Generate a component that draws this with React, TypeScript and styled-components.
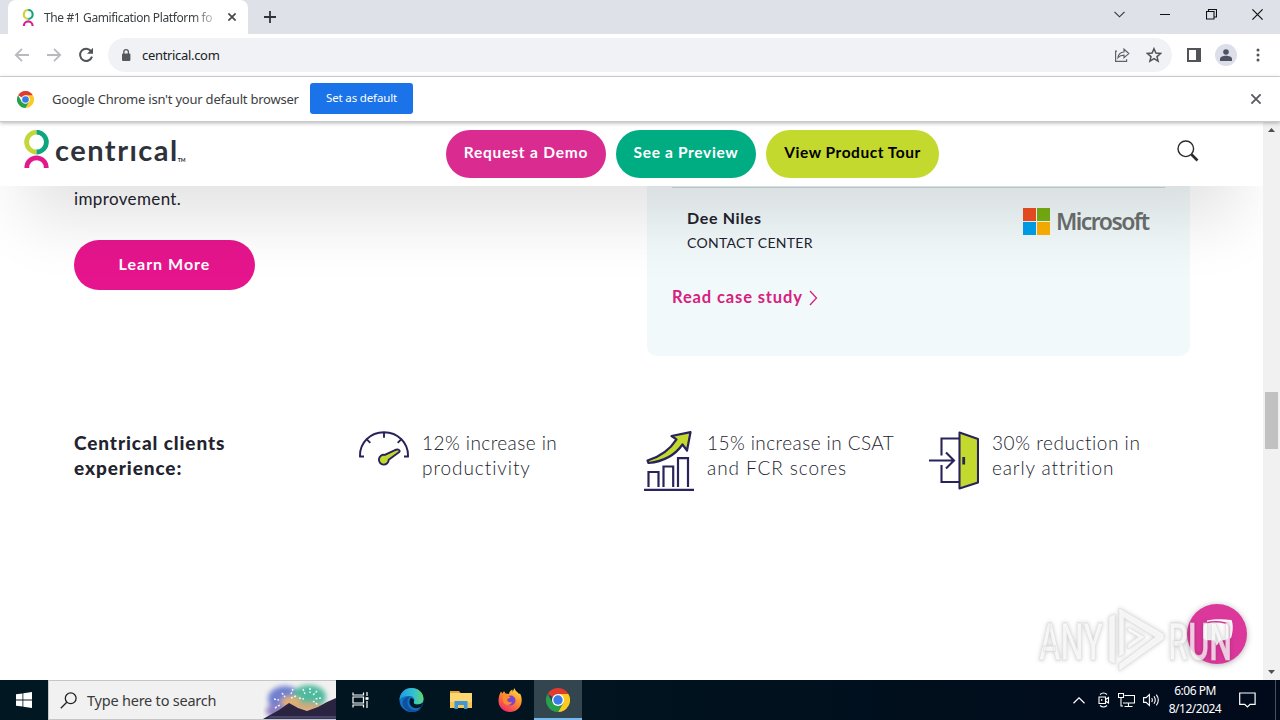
import type { ReactNode } from "react";
import styled, { createGlobalStyle } from "styled-components";

const ui = `"Noto Sans", "Open Sans", sans-serif`;
const brand = `"Lato", "Inter", sans-serif`;
const navy = "#29235c";
const lime = "#c4d92e";

type Stat = {
  icon: ReactNode;
  lines: { text: string; spacing: number }[];
};

const stats: Stat[] = [
  {
    icon: <GaugeIcon />,
    lines: [
      { text: "12% increase in", spacing: 0.43 },
      { text: "productivity", spacing: 0.93 },
    ],
  },
  {
    icon: <GrowthIcon />,
    lines: [
      { text: "15% increase in CSAT", spacing: 0.42 },
      { text: "and FCR scores", spacing: 0.93 },
    ],
  },
  {
    icon: <DoorIcon />,
    lines: [
      { text: "30% reduction in", spacing: 0.55 },
      { text: "early attrition", spacing: 0.88 },
    ],
  },
];

export default function App() {
  return (
    <Screen>
      <GlobalStyle />
      <TabStrip>
        <Tab>
          <CentricalMark width={12} height={17} />
          <TabTitle>The #1 Gamification Platform fo</TabTitle>
          <CrossIcon size={8} weight={1.7} color="#45494d" />
        </Tab>
        <NewTab>
          <svg width="12" height="12" viewBox="0 0 12 12" stroke="#303337" strokeWidth="1.8">
            <path d="M6 0v12M0 6h12" />
          </svg>
        </NewTab>
        <WindowControls>
          <svg width="11" height="7" viewBox="0 0 11 7" fill="none" stroke="#333" strokeWidth="1.1">
            <path d="M.5 .8l5 5 5-5" />
          </svg>
          <svg width="11" height="11" viewBox="0 0 11 11" stroke="#111">
            <path d="M0 5.500h10" />
          </svg>
          <svg width="11" height="11" viewBox="0 0 11 11" fill="none" stroke="#111" strokeWidth="1.1">
            <path d="M.5 2.500h7.500V10H.5zM2.500 2.500V.5h8v7.500H8" />
          </svg>
          <CrossIcon size={11} weight={1.2} color="#111" />
        </WindowControls>
      </TabStrip>

      <Toolbar>
        <NavIcons>
          <svg width="16" height="14" viewBox="0 0 16 14" fill="none" stroke="#b8babd" strokeWidth="1.8">
            <path d="M15 7H2M8 .8L1.8 7 8 13.2" />
          </svg>
          <svg width="16" height="14" viewBox="0 0 16 14" fill="none" stroke="#b8babd" strokeWidth="1.8">
            <path d="M1 7h13M8 .8L14.2 7 8 13.2" />
          </svg>
          <svg width="16" height="16" viewBox="0 0 16 16" fill="none" stroke="#505357" strokeWidth="2">
            <path d="M13.2 4.3A6.1 6.1 0 1 0 14 9.6" />
            <path d="M15 .8v6H9z" fill="#505357" stroke="none" />
          </svg>
        </NavIcons>
        <AddressBar>
          <svg width="10" height="12" viewBox="0 0 10 12" fill="#55585c">
            <rect x="1" y="4.5" width="8.4" height="7.5" rx="1" />
            <path d="M2.8 5V3a2.3 2.3 0 0 1 4.6 0v2" fill="none" stroke="#55585c" strokeWidth="1.3" />
          </svg>
          <Url>centrical.com</Url>
          <svg width="16" height="16" viewBox="0 0 16 16" fill="none" stroke="#5f6368" strokeWidth="1.2">
            <path d="M3 4.200H1.600v10.200h11v-2.200M4 10.600c.4-3.600 2.400-5.400 6-5.600V2.200l4.800 4.400L10 10.800V8.200C7.400 8.200 5.400 9 4 10.600z" />
          </svg>
          <svg width="16" height="16" viewBox="0 0 16 16" fill="none" stroke="#505357" strokeWidth="1.5">
            <path d="M8 1.700l1.900 4.400 4.700.4-3.600 3.100 1.100 4.600L8 11.700l-4.100 2.500L5 9.600 1.400 6.500l4.700-.4z" />
          </svg>
        </AddressBar>
        <svg width="14" height="14" viewBox="0 0 14 14">
          <path d="M0 0h14v14H0zM2 2v10h7V2z" fill="#505357" fillRule="evenodd" />
        </svg>
        <Avatar>
          <svg width="12" height="12" viewBox="0 0 12 12" fill="#4d5264">
            <circle cx="6" cy="3" r="2.8" />
            <path d="M0 12V10c0-2 3-3.200 6-3.200S12 8 12 10v2z" />
          </svg>
        </Avatar>
        <svg width="4" height="14" viewBox="0 0 4 14" fill="#505357">
          <circle cx="2" cy="2" r="1.500" />
          <circle cx="2" cy="7" r="1.500" />
          <circle cx="2" cy="12" r="1.500" />
        </svg>
      </Toolbar>

      <InfoBar>
        <ChromeIcon size={17} />
        <InfoText>Google Chrome isn't your default browser</InfoText>
        <DefaultButton>Set as default</DefaultButton>
        <CrossIcon size={10} weight={1.8} color="#55585c" />
      </InfoBar>

      <Viewport>
        <Page>
          <SiteHeader>
            <Logo>
              <CentricalMark width={26} height={38} />
              <LogoText>centrıcal</LogoText>
              <Trademark>TM</Trademark>
            </Logo>
            <Actions>
              <Pill $bg="#d92b90" $width={160} $spacing={0.8}>Request a Demo</Pill>
              <Pill $bg="#00ad83" $width={140} $spacing={0.66}>See a Preview</Pill>
              <Pill $bg={lime} $width={173} $spacing={0.52} $dark>View Product Tour</Pill>
            </Actions>
            <svg width="22" height="22" viewBox="0 0 22 22" fill="none" stroke="#2a2a2a">
              <circle cx="8.800" cy="8.800" r="7.800" strokeWidth="1.400" />
              <path d="M14.500 14.500l6 6" strokeWidth="2.600" />
            </svg>
          </SiteHeader>

          <Feature>
            <FeatureCopy>
              <Copy>improvement.</Copy>
              <LearnMore>Learn More</LearnMore>
            </FeatureCopy>
            <Quote>
              <Person>
                <div>
                  <PersonName>Dee Niles</PersonName>
                  <PersonRole>CONTACT CENTER</PersonRole>
                </div>
                <Microsoft>
                  <svg width="27" height="27" viewBox="0 0 27 27">
                    <path fill="#f04e23" d="M0 0h13v13H0z" />
                    <path fill="#78b013" d="M14 0h13v13H14z" />
                    <path fill="#00a1ee" d="M0 14h13v13H0z" />
                    <path fill="#fdb100" d="M14 14h13v13H14z" />
                  </svg>
                  <MicrosoftText>Microsoft</MicrosoftText>
                </Microsoft>
              </Person>
              <CaseLink>
                Read case study
                <svg width="9" height="16" viewBox="0 0 9 16" fill="none" stroke="#d6217f" strokeWidth="1.300">
                  <path d="M1 1l6.500 7L1 15" />
                </svg>
              </CaseLink>
            </Quote>
          </Feature>

          <Results>
            <ResultsTitle>
              Centrical clients
              <br />
              experience:
            </ResultsTitle>
            {stats.map((stat) => (
              <Result key={stat.lines[0].text}>
                {stat.icon}
                <div>
                  {stat.lines.map((line) => (
                    <ResultLine key={line.text} $spacing={line.spacing}>
                      {line.text}
                    </ResultLine>
                  ))}
                </div>
              </Result>
            ))}
          </Results>

          <ChatButton>
            <svg width="32" height="30" viewBox="0 0 32 30">
              <path d="M6 1.500c7-1.700 16-1.700 24.500-.5 2 5 1.500 12-.5 18l-6 3L6 8z" fill="#fff" />
              <path d="M4.500 4c6-1.500 14-1.500 20 0 2.500.5 3.500 1.800 3.500 4v9.500c0 2.500-1 3.800-3.500 4.200l-5 .6-4 6-2.500-6-8-.6c-2.500-.3-3.500-1.700-3.500-4.200V8c0-2.200.8-3.500 3-4z" fill="#fff" stroke="#dc379b" strokeWidth="1.500" />
            </svg>
          </ChatButton>
          <Watermark />
        </Page>
        <Scrollbar>
          <Arrow />
          <Thumb />
          <Arrow $down />
        </Scrollbar>
      </Viewport>

      <Taskbar>
        <Start>
          <svg width="16" height="16" viewBox="0 0 16 16" fill="#fff">
            <path d="M0 2.300l6.500-.9v6.200H0zM7.300 1.300L16 0v7.600H7.300zM0 8.400h6.500v6.200L0 13.700zM7.300 8.400H16V16l-8.700-1.300z" />
          </svg>
        </Start>
        <SearchBox>
          <svg width="17" height="17" viewBox="0 0 17 17" fill="none" stroke="#222" strokeWidth="1.300">
            <circle cx="10.700" cy="6.300" r="5.400" />
            <path d="M6.800 10.200L.8 16.200" />
          </svg>
          <SearchText>Type here to search</SearchText>
          <Fireworks />
        </SearchBox>
        <TaskView>
          <svg width="17" height="16" viewBox="0 0 17 16" fill="none" stroke="#fff" strokeWidth="1.200">
            <path d="M1 .5v2.500h10.500V.5M1 15.500V13h10.500v2.500M1 5h10.500v6H1zM15 0v4M15 9v7" />
            <path d="M13.500 5.200h3v2.600h-3z" fill="#fff" stroke="none" />
          </svg>
        </TaskView>
        <TaskButton>
          <EdgeIcon />
        </TaskButton>
        <TaskButton>
          <FolderIcon />
        </TaskButton>
        <TaskButton>
          <FirefoxIcon />
        </TaskButton>
        <TaskButton $active>
          <ChromeIcon size={24} />
        </TaskButton>
        <Tray>
          <svg width="12" height="7" viewBox="0 0 12 7" fill="none" stroke="#fff" strokeWidth="1.200">
            <path d="M.5 6.200L6 .8l5.500 5.400" />
          </svg>
          <svg width="12" height="16" viewBox="0 0 12 16" fill="none" stroke="#fff" strokeWidth="1.100">
            <path d="M2 2.500Q5.500-.5 9 2.500M2 13.500q3.500 3 7 0M1 5h6.500v6.500H1zM7.500 7.500l3-2v5.500l-3-2M3.700 7v2" />
          </svg>
          <svg width="17" height="14" viewBox="0 0 17 14" fill="none" stroke="#fff" strokeWidth="1.100">
            <path d="M6.500 2.500h10v7.500H5M10.500 10v3.500M6.500 13.500h8M.5.500h5v4H.5zM3 4.500v8.500h2" />
          </svg>
          <svg width="17" height="14" viewBox="0 0 17 14" fill="none" stroke="#fff" strokeWidth="1.100">
            <path d="M.6 4.600h2.500L6.400 1.500v11L3.100 9.400H.6zM8.700 5q1.300 2 0 4M11 3.300q2.500 3.700 0 7.400M13.300 1.600q4 5.400 0 10.800" />
          </svg>
        </Tray>
        <Clock>
          <span>6:06 PM</span>
          <span>8/12/2024</span>
        </Clock>
        <Notifications>
          <svg width="17" height="16" viewBox="0 0 17 16" fill="none" stroke="#fff" strokeWidth="1.200">
            <path d="M.7 1h15.400v11.300h-5L8.400 15l-2.700-2.700h-5z" />
          </svg>
        </Notifications>
      </Taskbar>
    </Screen>
  );
}

function CrossIcon({ size, weight, color }: { size: number; weight: number; color: string }) {
  return (
    <svg width={size} height={size} viewBox={`0 0 ${size} ${size}`} stroke={color} strokeWidth={weight}>
      <path d={`M.4 .4L${size - 0.4} ${size - 0.4}M${size - 0.4} .4L.4 ${size - 0.4}`} />
    </svg>
  );
}

function CentricalMark({ width, height }: { width: number; height: number }) {
  return (
    <svg width={width} height={height} viewBox="0 0 26 38" fill="none" strokeWidth="4.800">
      <path d="M13.500 22a9.900 9.900 0 0 1 0-19.800" stroke="#c4d63a" />
      <path d="M13.500 2.200a9.900 9.900 0 0 1 0 19.800" stroke="#0fa57f" />
      <path d="M3.800 38v-.5a9.700 9.700 0 0 1 19.400 0v.5" stroke="#e01a8c" />
    </svg>
  );
}

function ChromeIcon({ size }: { size: number }) {
  return (
    <svg width={size} height={size} viewBox="0 0 24 24">
      <path d="M12 12L1.600 6A12 12 0 0 1 22.400 6z" fill="#df3b2f" />
      <path d="M12 6h10.400A12 12 0 0 1 12 24l5.200-9z" fill="#fccb22" />
      <path d="M6.800 15L1.600 6A12 12 0 0 0 12 24l5.200-9z" fill="#27a04b" />
      <circle cx="12" cy="12" r="6" fill="#fff" />
      <circle cx="12" cy="12" r="4.700" fill="#3a7bea" />
    </svg>
  );
}

function GaugeIcon() {
  return (
    <svg width="50" height="60" viewBox="0 0 50 60" fill="none" stroke={navy} strokeWidth="1.900">
      <path d="M5 25.500H1C.5 12 11 1.200 25 1.200S49.500 12 49 25.500h-4M25 1.200v5.500M8.300 8.800l3 3M41.700 8.800l-3 3" />
      <path d="M39.800 18.800c1.600 1 .8 2-.2 2.700l-9.900 7.200a4.900 4.900 0 1 1-4-4.800l9.200-4.300c2-1 3.700-1.600 4.900-.8z" fill={lime} />
    </svg>
  );
}

function GrowthIcon() {
  return (
    <svg width="50" height="60" viewBox="0 0 50 60" fill="none" stroke={navy} strokeWidth="2.200">
      <path d="M0 58.800h50M4.500 56V41h10v15M19.500 56V35.500h9.700V56M34 56V27.200h10V56" />
      <path d="M46.500 1.200L27.500 5l5 3.300C25 20 15 26 3.500 29.500l1 2.500C19 30.500 30.500 25 38.500 13.500L43 19.500z" fill={lime} strokeLinejoin="round" />
    </svg>
  );
}

function DoorIcon() {
  return (
    <svg width="50" height="60" viewBox="0 0 50 60" fill="none" stroke={navy} strokeWidth="2.100">
      <path d="M30 7.500H12.500v17M12.500 34v17H30M0 29.500h25M17 21.500l8 8-8 8" />
      <path d="M30.500 1.500L49 8v43.500l-18.500 6z" fill={lime} strokeLinejoin="round" />
      <path d="M34.700 26v7.500" strokeWidth="2.800" />
    </svg>
  );
}

function EdgeIcon() {
  return (
    <svg width="25" height="24" viewBox="0 0 25 24">
      <defs>
        <linearGradient id="edgeTop" x1="0" x2="1">
          <stop offset="0" stopColor="#1b9de2" />
          <stop offset=".6" stopColor="#35c1d0" />
          <stop offset="1" stopColor="#62d76d" />
        </linearGradient>
      </defs>
      <circle cx="12.500" cy="12" r="12" fill="#1272c4" />
      <path d="M.5 12C1 4.500 6 0 12.500 0 19.500 0 24.500 5 24.500 10.500c0 4-3 6-6 6-3.500 0-4.500-1.500-3.500-3 1-2 0-5-4-5.500C6 7.500 2 9 .5 12z" fill="url(#edgeTop)" />
      <path d="M11 8.500c-3 2.500-3.500 7-1 10.500 3 4 8 4 12 1.500-5 5.500-14 4.500-17.500-2C2 13.500 5 8.500 11 8.500z" fill="#124f9e" />
      <path d="M15 13.500c-1 1.500 0 3 3.500 3 2.500 0 5-1 6-2.500L22 19c-4 2-9 1.500-11-2.500-1-2.500-.5-5 1-6.500 2 .2 3.500 1.800 3 3.500z" fill="#011721" />
    </svg>
  );
}

function FolderIcon() {
  return (
    <svg width="22" height="20" viewBox="0 0 22 20">
      <path d="M0 1h9l2 2.500H0z" fill="#e8a33d" />
      <path d="M0 3h22v15H0z" fill="#fbd671" />
      <path d="M0 12h22v6H0z" fill="#f6c557" />
      <path d="M4.500 19v-8h13v8h-3.500v-4H8v4z" fill="#3f97d6" />
    </svg>
  );
}

function FirefoxIcon() {
  return (
    <svg width="24" height="24" viewBox="0 0 24 24">
      <defs>
        <linearGradient id="fox" x1=".8" y1="0" x2=".2" y2="1">
          <stop offset="0" stopColor="#ffe04a" />
          <stop offset=".45" stopColor="#ff8a2a" />
          <stop offset="1" stopColor="#f0246e" />
        </linearGradient>
      </defs>
      <path d="M3 3.500l1.500 2L6 3l1.500 2.500L11 6c0-2 1.500-3.500 3.500-4.500V4l2-4c.5 3 3.500 4 4.500 6l1-.5c1.500 3 2 5 1.500 9C22.500 20 18 24 12 24S.5 19.500.5 13C.5 9 1.500 6 3 3.500z" fill="url(#fox)" />
      <circle cx="12.500" cy="12.500" r="5" fill="#7a45d0" />
      <path d="M5 8c3-1 5.500-.5 7.500 1.500l-3 1.500c-1 2 1 4 4.500 3-1 3.500-6.500 4-8.500.5-1-2-1-4-.5-6.500z" fill="#ff8a2e" />
    </svg>
  );
}

function Fireworks() {
  return (
    <svg width="73" height="38" viewBox="0 0 73 38">
      <defs>
        <filter id="soft" x="-20%" y="-20%" width="140%" height="140%">
          <feGaussianBlur stdDeviation="2.500" />
        </filter>
      </defs>
      <g filter="url(#soft)">
        <ellipse cx="22" cy="18" rx="17" ry="13" fill="#6f7fcf" />
        <ellipse cx="46" cy="16" rx="17" ry="12" fill="#4fb99c" />
        <ellipse cx="15" cy="30" rx="12" ry="7" fill="#8f7fc0" />
        <ellipse cx="28" cy="21" rx="10" ry="6" fill="#e0b070" />
        <ellipse cx="46" cy="27" rx="14" ry="5" fill="#d7a878" />
      </g>
      <path d="M19 12l3 4M30 8l-2 5M11 18l5 1M33 15l-5 2M12 27l5-3M40 8l2 5M47 7v5M54 10l-4 4M58 17l-6 1M36 17l5 1M50 20l5 4" stroke="#e9f6ff" strokeWidth="1.500" strokeDasharray="2 1.500" />
      <path d="M0 38l16-9 10-7 9 5 9 3 11-4 9-5 9-4v21z" fill="#2b2440" />
      <path d="M8 35h65v2.500H4z" fill="#47456c" />
    </svg>
  );
}

function Watermark() {
  return (
    <WatermarkSvg width="210" height="76" viewBox="0 0 210 76">
      <g fill="#fff" fillOpacity=".75" stroke="#d4d4d4" strokeOpacity=".6" strokeWidth=".8">
        <text x="3" y="53" fontFamily="Roboto, sans-serif" fontWeight="500" fontSize="52" textLength="64" lengthAdjust="spacingAndGlyphs">ANY</text>
        <text x="132" y="53" fontFamily="Roboto, sans-serif" fontWeight="500" fontSize="52" textLength="64" lengthAdjust="spacingAndGlyphs">RUN</text>
        <path d="M73 10l6-3v50l-6-3z" />
        <path d="M83 1l45 26v5L83 64v-7l36-27L88 11v36l-5 3z" fillRule="evenodd" />
        <path d="M92 20l17 10-17 12v-5l10-7-10-6z" />
      </g>
    </WatermarkSvg>
  );
}

const GlobalStyle = createGlobalStyle`
  * {
    box-sizing: border-box;
  }
  body {
    margin: 0;
    overflow: hidden;
  }
  svg {
    display: block;
    flex: none;
  }
`;

const Screen = styled.div`
  width: 1280px;
  height: 720px;
  display: flex;
  flex-direction: column;
  overflow: hidden;
  background: #fff;
  font-family: ${ui};
  white-space: nowrap;
`;

const TabStrip = styled.div`
  height: 34px;
  flex: none;
  display: flex;
  padding-left: 8px;
  background: #dee1e8;
`;

const Tab = styled.div`
  width: 240px;
  display: flex;
  align-items: center;
  padding: 0 12px 0 14px;
  background: #fff;
  border-radius: 8px 8px 0 0;
`;

const TabTitle = styled.span`
  width: 172px;
  margin: 0 12px 0 10px;
  font-size: 12px;
  letter-spacing: -0.38px;
  color: #3c4043;
  mask-image: linear-gradient(to right, #000 148px, transparent 178px);
`;

const NewTab = styled.div`
  display: flex;
  align-items: center;
  padding-left: 16px;
`;

const WindowControls = styled.div`
  display: flex;
  align-items: center;
  gap: 35px;
  margin-left: auto;
  padding: 0 17px 6px 0;
`;

const Toolbar = styled.div`
  height: 43px;
  flex: none;
  display: flex;
  align-items: center;
  padding: 0 20px 0 14px;
  border-bottom: 1px solid #d7d9dc;

  > svg:last-child {
    margin-left: 19px;
  }
`;

const NavIcons = styled.div`
  display: flex;
  align-items: center;
  gap: 16px;
  width: 94px;
`;

const AddressBar = styled.div`
  width: 1064px;
  height: 34px;
  display: flex;
  align-items: center;
  gap: 16px;
  margin-right: 15px;
  padding: 0 10px 0 13px;
  border-radius: 17px;
  background: #f0f2f5;
`;

const Url = styled.span`
  flex: 1;
  margin-left: -5px;
  font-size: 13px;
  letter-spacing: -0.32px;
  color: #202124;
`;

const Avatar = styled.div`
  width: 22px;
  height: 22px;
  display: flex;
  align-items: center;
  justify-content: center;
  margin-left: 14px;
  border-radius: 50%;
  background: #dcdfea;
`;

const InfoBar = styled.div`
  height: 45px;
  flex: none;
  display: flex;
  align-items: center;
  padding: 0 19px 0 17px;
  position: relative;
  z-index: 3;
  background: #fff;
  border-bottom: 1px solid #c9cacc;
  box-shadow: 0 1px 4px rgba(0, 0, 0, 0.3);

  > svg:last-child {
    margin-left: auto;
  }
`;

const InfoText = styled.span`
  width: 258px;
  margin-left: 18px;
  font-size: 13px;
  letter-spacing: -0.22px;
  color: #3c4043;
`;

const DefaultButton = styled.button`
  width: 103px;
  height: 31px;
  margin-top: -2px;
  padding: 0 0 2px;
  border: 0;
  border-radius: 3px;
  background: #1a73e8;
  color: #fff;
  font-family: ${ui};
  font-size: 11.5px;
  letter-spacing: -0.15px;
`;

const Viewport = styled.div`
  height: 558px;
  flex: none;
  display: flex;
`;

const Page = styled.main`
  width: 1263px;
  position: relative;
  overflow: hidden;
  font-family: ${brand};
  color: #22232e;
`;

const SiteHeader = styled.header`
  height: 64px;
  display: flex;
  align-items: center;
  padding: 0 64px 0 23px;
  position: relative;
  z-index: 2;

  /* taller than the bar so the drop shadow keeps its full strength */
  &::before {
    content: "";
    position: absolute;
    inset: -200px 0 0;
    z-index: -1;
    background: #fff;
    box-shadow: 0 60px 60px -25px rgba(0, 0, 0, 0.11);
  }

  > svg {
    margin: -7px 0 0 auto;
  }
`;

const Logo = styled.div`
  width: 423px;
  display: flex;
  align-items: center;
  margin-top: -10px;
`;

const LogoText = styled.span`
  margin: 2px 0 0 6px;
  font-size: 29px;
  font-weight: 700;
  line-height: 38px;
  letter-spacing: 1.5px;
  color: #2d323b;
`;

const Trademark = styled.span`
  margin: 21px 0 0 -1px;
  font-size: 5px;
  font-weight: 700;
`;

const Actions = styled.div`
  display: flex;
  gap: 10px;
`;

const Pill = styled.button<{ $bg: string; $width: number; $spacing: number; $dark?: boolean }>`
  width: ${(props) => props.$width}px;
  height: 48px;
  padding: 0 0 5px;
  border: 0;
  border-radius: 24px;
  background: ${(props) => props.$bg};
  color: ${(props) => (props.$dark ? "#000" : "#fff")};
  font-family: ${brand};
  font-size: 15.5px;
  font-weight: 700;
  letter-spacing: ${(props) => props.$spacing}px;
`;

const Feature = styled.section`
  height: 245px;
  display: flex;
  justify-content: space-between;
  padding: 0 73px 0 74px;
`;

const FeatureCopy = styled.div`
  display: flex;
  flex-direction: column;
  gap: 29px;
`;

const Copy = styled.p`
  margin: 0;
  font-size: 17px;
  line-height: 25px;
  letter-spacing: 0.37px;
`;

const LearnMore = styled.button`
  width: 181px;
  height: 50px;
  padding: 0 0 3px;
  border: 0;
  border-radius: 25px;
  background: #e6158d;
  color: #fff;
  font-family: ${brand};
  font-size: 16px;
  font-weight: 700;
  letter-spacing: 1px;
`;

const Quote = styled.div`
  width: 543px;
  height: 170px;
  padding: 1px 25px 0;
  border-radius: 0 0 10px 10px;
  background: #f2f9fb;
`;

const Person = styled.div`
  height: 98px;
  display: flex;
  justify-content: space-between;
  padding: 17px 15px 0;
  border-top: 1px solid #c5dcd9;
`;

const PersonName = styled.div`
  font-size: 16px;
  font-weight: 700;
  line-height: 25px;
  letter-spacing: 0.65px;
`;

const PersonRole = styled.div`
  font-size: 14px;
  line-height: 25px;
  letter-spacing: 0.3px;
`;

const Microsoft = styled.div`
  height: 27px;
  display: flex;
  align-items: center;
  gap: 6px;
  margin-top: 3px;
`;

const MicrosoftText = styled.span`
  width: 94px;
  margin-top: -2px;
  font-family: ${ui};
  font-size: 23px;
  font-weight: 600;
  letter-spacing: -1.55px;
  color: #6b706f;
`;

const CaseLink = styled.a`
  display: flex;
  align-items: center;
  gap: 6px;
  line-height: 25px;
  font-size: 16.5px;
  font-weight: 700;
  letter-spacing: 0.87px;
  color: #d6217f;
`;

const Results = styled.section`
  display: grid;
  grid-template-columns: repeat(4, 285px);
  padding-left: 74px;
`;

const ResultsTitle = styled.h3`
  margin: -1px 0 0;
  font-size: 19px;
  font-weight: 900;
  line-height: 25px;
  letter-spacing: 0.9px;
`;

const Result = styled.div`
  display: flex;
  gap: 13px;
`;

const ResultLine = styled.div<{ $spacing: number }>`
  position: relative;
  top: -1px;
  font-size: 19px;
  font-weight: 300;
  line-height: 25px;
  letter-spacing: ${(props) => props.$spacing}px;
`;

const ChatButton = styled.div`
  position: absolute;
  left: 1187px;
  top: 482px;
  width: 60px;
  height: 60px;
  display: flex;
  align-items: center;
  justify-content: center;
  border-radius: 50%;
  background: #dc379b;
  box-shadow: 0 1px 6px rgba(0, 0, 0, 0.3);
`;

const WatermarkSvg = styled.svg`
  position: absolute;
  left: 1036px;
  top: 485px;
  overflow: visible;
  filter: drop-shadow(0 0 2px rgba(0, 0, 0, 0.25));
`;

const Scrollbar = styled.div`
  width: 17px;
  display: flex;
  flex-direction: column;
  align-items: center;
  padding: 6px 0;
  background: #f1f1f1;
`;

const Arrow = styled.div<{ $down?: boolean }>`
  width: 7px;
  height: 4px;
  background: #505050;
  clip-path: ${(props) =>
    props.$down ? "polygon(0 0, 100% 0, 50% 100%)" : "polygon(50% 0, 100% 100%, 0 100%)"};
`;

const Thumb = styled.div`
  width: 13px;
  height: 57px;
  margin: 260px 0 auto;
  background: #c1c1c1;
`;

const Taskbar = styled.footer`
  height: 40px;
  flex: none;
  display: flex;
  background: linear-gradient(to right, #011822, #01131f 50%, #010a1b);
`;

const Start = styled.div`
  width: 48px;
  display: flex;
  align-items: center;
  justify-content: center;
`;

const SearchBox = styled.div`
  width: 288px;
  display: flex;
  align-items: center;
  padding-left: 11px;
  border: 1px solid #c4c6c8;
  border-right: 0;
  background: #f1f1f1;

  > svg:last-child {
    margin-left: auto;
  }
`;

const SearchText = styled.span`
  margin-left: 10px;
  font-size: 14.5px;
  letter-spacing: -0.22px;
  color: #3a3a3a;
`;

const TaskButton = styled.div<{ $active?: boolean }>`
  width: ${(props) => (props.$active ? 48 : 49)}px;
  display: flex;
  align-items: center;
  justify-content: center;
  background: ${(props) => (props.$active ? "#33454e" : "transparent")};
  box-shadow: ${(props) => (props.$active ? "inset 0 -2px #76b9ed" : "none")};
`;

const TaskView = styled(TaskButton)`
  width: 48px;
  margin-right: 3px;
`;

const Tray = styled.div`
  display: flex;
  align-items: center;
  gap: 8px;
  margin-left: auto;

  > svg:first-child {
    margin-right: 5px;
  }
`;

const Clock = styled.div`
  width: 70px;
  display: flex;
  flex-direction: column;
  align-items: center;
  padding-top: 2px;
  font-size: 12px;
  line-height: 18px;
  letter-spacing: -0.5px;
  color: #fff;
`;

const Notifications = styled.div`
  width: 46px;
  display: flex;
  align-items: center;
  justify-content: center;
  margin-right: 4px;
  padding-right: 11px;
  border-right: 1px solid #47505c;
`;
